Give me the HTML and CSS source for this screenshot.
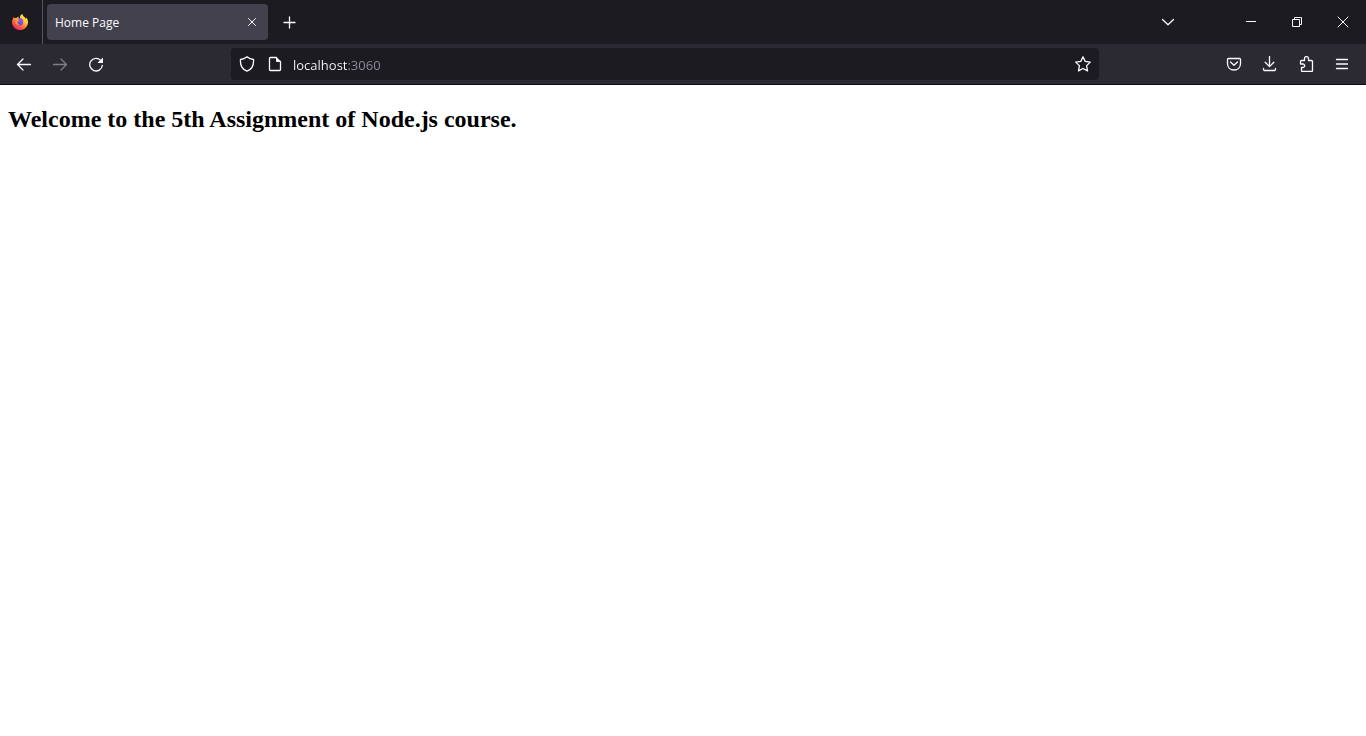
FILE: index.html
```html
<!DOCTYPE html>
<html lang="en">
<head>
<meta charset="utf-8">
<meta name="viewport" content="width=device-width, initial-scale=1">
<title>Home Page</title>
<link rel="stylesheet" href="styles.css">
</head>
<body>
<div class="browser">
  <header class="chrome">
    <div class="tab-bar">
      <button class="view-button" type="button" aria-label="Firefox View">
        <svg class="icon" viewBox="0 0 16 16">
          <defs>
            <linearGradient id="flame" x1="0.85" y1="0.05" x2="0.2" y2="0.95">
              <stop offset="0" stop-color="#fff04a"/>
              <stop offset="0.35" stop-color="#ffc832"/>
              <stop offset="0.6" stop-color="#ff7a35"/>
              <stop offset="1" stop-color="#f5186a"/>
            </linearGradient>
            <linearGradient id="globe" x1="0.7" y1="0" x2="0.3" y2="1">
              <stop offset="0" stop-color="#a05af5"/>
              <stop offset="1" stop-color="#5b45c9"/>
            </linearGradient>
          </defs>
          <path fill="url(#flame)" d="M10.500 0C10.600 1.300 11.500 2.200 12.500 3C13.200 3.600 13.600 4.300 13.800 5C14.200 4.600 14.300 4 14.200 3.300C15.500 5 16 6.500 16 8.200C16 12.500 12.500 16 8.100 16C3.600 16 0 12.500 0 8.200C0 6.700 .5 5.300 1.200 4.300L1.600 2.900L2.700 4C3.300 3.900 4 3.900 4.600 4.100C4.900 3.300 5.500 2.700 6.400 2.400C6.300 3.600 6.700 4.200 7.400 4.800L8.300 4.500C7.400 2.500 8.500 .8 10.500 0Z"/>
          <circle cx="7.800" cy="8.300" r="3.300" fill="url(#globe)"/>
          <path fill="#ff9a2e" d="M3.500 5.500C5 4.800 6.400 5.100 7.500 6.300C7 7.300 5.900 7.100 5.500 8C5 9.300 6.200 10.500 8 10.300C6.500 11.800 3.700 10.700 3.300 8.500Z"/>
          <path fill="#8b4ee8" d="M6.400 4.200C8.500 3.700 10.900 4.700 11.300 7L9.800 8.500L7.400 6.500Z"/>
        </svg>
      </button>
      <div class="tab">
        <span class="tab-label">Home Page</span>
        <button class="tab-close" type="button" aria-label="Close tab">
          <svg class="icon" viewBox="0 0 16 16"><path class="line thin" d="M4.500 4.500L11.500 11.500M11.500 4.500L4.500 11.500"/></svg>
        </button>
      </div>
      <button class="new-tab" type="button" aria-label="New tab">
        <svg class="icon" viewBox="0 0 16 16"><path class="line" d="M8.500 3V14M3 8.500H14"/></svg>
      </button>
      <button class="list-tabs" type="button" aria-label="List all tabs">
        <svg class="icon" viewBox="0 0 16 16"><path class="line" d="M2.500 5.500L8 10.700L13.500 5.500"/></svg>
      </button>
      <button class="window-button" type="button" aria-label="Minimize">
        <svg class="icon" viewBox="0 0 16 16"><path class="line crisp" d="M3 7.500H13"/></svg>
      </button>
      <button class="window-button" type="button" aria-label="Restore">
        <svg class="icon" viewBox="0 0 16 16"><path class="line crisp" d="M3.500 5.500H10.500V12.500H3.500ZM5.500 5V3.500H12.500V10.500H11"/></svg>
      </button>
      <button class="window-button" type="button" aria-label="Close window">
        <svg class="icon" viewBox="0 0 16 16"><path class="line thin" d="M3 3L13 13M13 3L3 13"/></svg>
      </button>
    </div>
    <div class="nav-bar">
      <nav class="button-group" aria-label="Navigation">
        <button class="tool" type="button" aria-label="Back">
          <svg class="icon" viewBox="0 0 16 16"><path class="line" d="M14.500 8.500H1.500M7 3L1.500 8.500L7 14"/></svg>
        </button>
        <button class="tool" type="button" aria-label="Forward" disabled>
          <svg class="icon" viewBox="0 0 16 16"><path class="line" d="M1.500 8.500H14.500M9 3L14.500 8.500L9 14"/></svg>
        </button>
        <button class="tool" type="button" aria-label="Reload">
          <svg class="icon" viewBox="0 0 16 16"><path class="line" d="M12.700 4.400A6.300 6.300 0 1 0 14.300 9.500"/><path class="solid" d="M15 2V7H10Q9.600 7 9.900 6.600L14.500 1.900Q15 1.600 15 2Z"/></svg>
        </button>
      </nav>
      <div class="spacer"></div>
      <div class="url-bar">
        <button class="url-icon" type="button" aria-label="Tracking protection">
          <svg class="icon" viewBox="0 0 16 16"><path class="line" d="M8 .8C10.300 2.700 12.500 3.300 14.500 3.500C15 9.500 12.500 13.500 8 15.200C3.500 13.500 1 9.500 1.500 3.500C3.500 3.300 5.700 2.700 8 .8Z"/></svg>
        </button>
        <button class="url-icon" type="button" aria-label="Site information">
          <svg class="icon" viewBox="0 0 16 16"><path class="line" d="M9.500 1.500H3.500Q2.500 1.500 2.500 2.500V13.500Q2.500 14.500 3.500 14.500H12.500Q13.500 14.500 13.500 13.500V5.500"/><path class="solid" d="M9 1H9.500L14 5.500V6H10Q9 6 9 5Z"/></svg>
        </button>
        <input class="url-input" type="text" value="localhost:3060" aria-label="Address" spellcheck="false">
        <button class="url-icon" type="button" aria-label="Bookmark this page">
          <svg class="icon" viewBox="0 0 16 16"><path class="line" d="M8 .8L10.200 5.400L15.300 6.100L11.600 9.600L12.500 14.900L8 12.500L3.500 14.900L4.400 9.600L.7 6.100L5.800 5.400Z"/></svg>
        </button>
      </div>
      <div class="spacer"></div>
      <div class="button-group">
        <button class="tool" type="button" aria-label="Save to Pocket">
          <svg class="icon" viewBox="0 0 16 16"><path class="line" d="M2.500 2.500H13.500Q14.500 2.500 14.500 3.500V7.500C14.500 11.500 11.700 14 8 14C4.300 14 1.500 11.500 1.500 7.500V3.500Q1.500 2.500 2.500 2.500ZM4.500 6L8 9.300L11.500 6"/></svg>
        </button>
        <button class="tool" type="button" aria-label="Downloads">
          <svg class="icon" viewBox="0 0 16 16"><path class="line" d="M7.500 .5V10.500M3.200 6.300L7.500 10.600L11.800 6.300M1.500 12.500V13.500Q1.500 14.500 2.500 14.500H12.500Q13.500 14.500 13.500 13.500V12.500"/></svg>
        </button>
        <button class="tool" type="button" aria-label="Extensions">
          <svg class="icon" viewBox="0 0 16 16"><path class="line" d="M6.500 4.500V2.500C6.500 0 10.500 0 10.500 2.500V4.500H13.500Q14.500 4.500 14.500 5.500V14.500Q14.500 15.500 13.500 15.500H4.500Q3.500 15.500 3.500 14.500V11.500H5C7.200 11.500 7.200 8 5 8H2.500V5.500Q2.500 4.500 3.500 4.500Z"/></svg>
        </button>
        <button class="tool" type="button" aria-label="Open application menu">
          <svg class="icon" viewBox="0 0 16 16"><path class="line" d="M2.500 3.500H13.500M2.500 8H13.500M2.500 12.500H13.500"/></svg>
        </button>
      </div>
    </div>
  </header>
  <main class="page">
    <h2 class="page-title">Welcome to the 5th Assignment of Node.js course.</h2>
  </main>
</div>
</body>
</html>
```
FILE: styles.css
```css
* {
  box-sizing: border-box;
}

body {
  margin: 0;
  background: #fff;
}

.browser {
  display: flex;
  flex-direction: column;
  min-height: 100vh;
}

.chrome {
  color: #fbfbfe;
  font-family: "Open Sans", "Noto Sans", sans-serif;
  border-bottom: 1px solid #0c0c0d;
}

button {
  display: flex;
  align-items: center;
  justify-content: center;
  flex: none;
  margin: 0;
  padding: 0;
  border: 0;
  background: none;
  color: inherit;
}

.icon {
  display: block;
  width: 16px;
  height: 16px;
}

.line {
  fill: none;
  stroke: currentColor;
  stroke-width: 1.3;
  stroke-linecap: round;
  stroke-linejoin: round;
}

.thin {
  stroke-width: 1;
}

.crisp {
  stroke-width: 1;
  stroke-linecap: butt;
  stroke-linejoin: miter;
}

.solid {
  fill: currentColor;
}

.tab-bar {
  display: flex;
  align-items: center;
  height: 44px;
  background: #1c1b22;
}

.view-button {
  width: 43px;
  height: 44px;
  padding-right: 2px;
  border-right: 1px solid #55545b;
}

.tab {
  display: flex;
  align-items: center;
  justify-content: space-between;
  width: 221px;
  height: 36px;
  margin-left: 4px;
  padding: 0 4px 0 8px;
  border-radius: 4px;
  background: #42414d;
}

.tab-label {
  padding-top: 2px;
  font-size: 12px;
  line-height: 16px;
}

.tab-close {
  width: 24px;
  height: 24px;
}

.new-tab {
  width: 36px;
  height: 36px;
  margin-left: 3px;
}

.list-tabs {
  width: 36px;
  height: 36px;
  margin-left: auto;
  margin-right: 42px;
}

.window-button {
  width: 46px;
  height: 44px;
}

.nav-bar {
  display: flex;
  align-items: center;
  height: 40px;
  padding: 0 6px;
  background: #2b2a33;
}

.button-group {
  display: flex;
}

.tool {
  width: 36px;
  height: 32px;
}

.tool:disabled {
  opacity: 0.4;
}

.spacer {
  flex: 13 1 0;
}

.url-bar {
  display: flex;
  align-items: center;
  flex: 96 1 0;
  height: 32px;
  padding: 0 2px;
  border-radius: 4px;
  background: #1c1b22;
}

.url-icon {
  width: 28px;
  height: 28px;
}

.url-input {
  flex: 1;
  min-width: 0;
  height: 28px;
  margin: 0;
  padding: 2px 4px 0;
  border: 0;
  outline: 0;
  font-family: inherit;
  font-size: 13px;
  line-height: 20px;
  /* The host is bright; the port after it is dimmed. */
  color: transparent;
  caret-color: #fbfbfe;
  background: linear-gradient(90deg, #fbfbfe 58px, #8f8f97 58px);
  background-clip: text;
  -webkit-background-clip: text;
}

.page {
  flex: 1;
  padding: 20px 8px;
  color: #000;
  font-family: "Liberation Serif", "Times New Roman", serif;
}

.page-title {
  margin: 0;
  font-size: 24px;
  line-height: 28px;
  font-weight: bold;
}
```
